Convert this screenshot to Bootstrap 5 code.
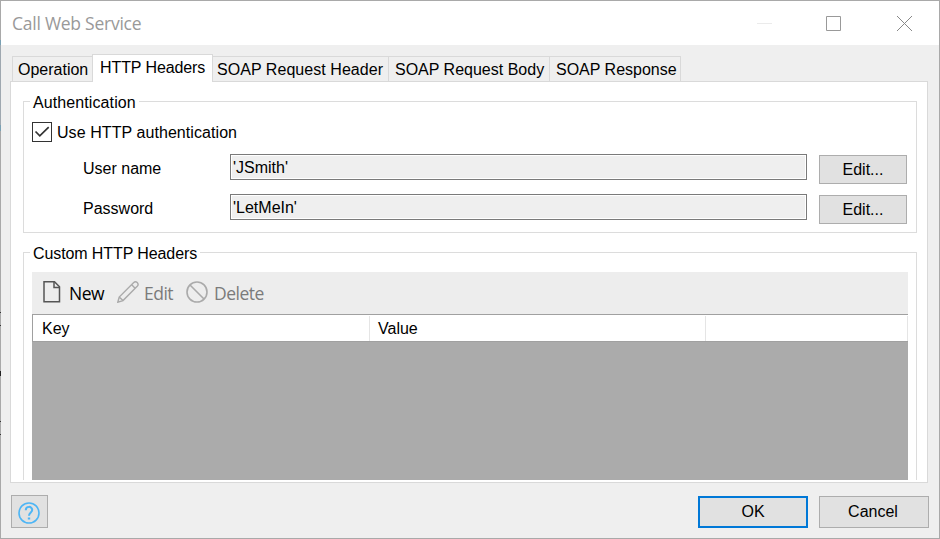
<!DOCTYPE html>
<html lang="en">
<head>
<meta charset="utf-8">
<title>Call Web Service</title>
<link href="https://cdn.jsdelivr.net/npm/bootstrap@5.3.0/dist/css/bootstrap.min.css" rel="stylesheet">
<style>
  body { font-family: "Liberation Sans", Arial, sans-serif; font-size: 16px; line-height: 18px; color: #000; overflow: hidden; }
  .dialog { width: 940px; height: 539px; background: #efefef; border: 1px solid #a9a9a9; }
  .edge { left: -1px; top: -1px; width: 1px; height: 539px;
    background: linear-gradient(#a9a9a9 40px, #79a0b3 40px 45px, #9fa8b0 45px 125px, #79a0b3 125px 131px, #a9a9a9 131px 312px, #333 312px 313px, #a9a9a9 313px 325px, #333 325px 326px, #a9a9a9 326px 371px, #222 371px 376px, #a9a9a9 376px 421px, #333 421px 422px, #a9a9a9 422px 434px, #333 434px 435px, #a9a9a9 435px); }
  .titlebar { height: 44px; padding: 0 27px 0 11px; }
  .seg { font-family: "Open Sans", "Noto Sans", sans-serif; line-height: 24px; white-space: nowrap; }
  .caption { color: #999; font-size: 17.5px; letter-spacing: -.25px; }
  .ctl-max { margin: 0 56px 0 54px; }
  .tabs { height: 37px; padding-left: 11px; margin-bottom: -1px; }
  .tab { height: 26px; border: 1px solid #d9d9d9; border-left: 0; padding: 4px 0 0 5px; white-space: nowrap; }
  .tab-first { border-left: 1px solid #d9d9d9; width: 80px; border-right: 0; }
  .tab-on { height: 28px; width: 121px; background: #fff; border-left: 1px solid #d9d9d9; border-bottom: 0; padding-left: 7px; letter-spacing: -.1px; }
  .w-hdr { width: 176px; padding-left: 4px; letter-spacing: .05px; }
  .w-body { width: 161px; padding-left: 6px; }
  .w-resp { width: 131px; padding-left: 6px; }
  .pane { width: 918px; height: 402px; margin-left: 9px; background: #fff; border: 1px solid #d9d9d9; padding: 19px 10px 2px 12px; }
  .group { border: 1px solid #dcdcdc; width: 894px; padding: 0 9px 0 8px; }
  .group-auth { height: 132px; margin-bottom: 19px; }
  .group-head { height: 228px; border-bottom: 0; }
  .cap { background: #fff; padding: 0 3px; margin: -9px 0 0 -2px; height: 20px; line-height: 20px; white-space: nowrap; }
  .cap-auth { width: 109px; letter-spacing: .1px; }
  .cap-head { width: 170px; letter-spacing: -.1px; }
  .check { width: 20px; height: 20px; border: 1px solid #333; background: #fff; }
  .use-row { margin: 9px 0 12px; gap: 5px; letter-spacing: .07px; }
  .use-row span { padding-top: 2px; }
  .field { height: 29px; margin-bottom: 11px; }
  .field .name { width: 147px; padding-top: 6px; }
  .field .val { width: 577px; height: 26px; border: 1px solid #7a7a7a; background: #efefef; box-shadow: inset 0 0 0 1px #fff; padding: 4px 0 0 2px; }
  .push { background: #e1e1e1; border: 1px solid #adadad; border-radius: 0; color: #000; padding: 0; font-size: 16px; line-height: 18px; }
  .push-edit { width: 88px; height: 29px; margin: 1px 0 0 12px; }
  .tools { background: #ededed; height: 42px; padding: 0 0 2px 11px; width: 876px; margin-top: 8px; }
  .tools svg { flex: none; }
  .tools .seg { font-size: 17.5px; letter-spacing: -.5px; padding-top: 1px; }
  .t-new { width: 48px; margin-left: 8px; }
  .t-edit { width: 42px; margin-left: 5px; }
  .t-del { margin-left: 6px; }
  .off { color: #7b7b7b; }
  .heads { width: 876px; height: 28px; background: #fff; border: 1px solid #a0a0a0; border-right: 0; padding-top: 1px; }
  .heads div { border-right: 1px solid #e5e5e5; padding: 4px 0 0 8px; }
  .heads .h-key { width: 337px; padding-left: 9px; }
  .h-val { width: 336px; }
  .h-rest { width: 202px; }
  .blank { width: 876px; height: 138px; background: #ababab; }
  .foot { padding: 12px 10px 0 10px; }
  .help { width: 37px; height: 33px; padding: 2px 2px 0 0; }
  .wide { width: 110px; height: 32px; margin-top: 1px; }
  .wide-cancel { padding-right: 2px; }
  .main { border: 2px solid #0078d7; margin-right: 11px; }
</style>
<script src="https://cdn.jsdelivr.net/npm/bootstrap@5.3.0/dist/js/bootstrap.bundle.min.js"></script>
</head>
<body>
<div class="dialog position-relative">
  <div class="edge position-absolute"></div>
  <div class="titlebar bg-white d-flex align-items-center justify-content-between">
    <span class="seg caption">Call Web Service</span>
    <div class="d-flex">
      <svg width="15" height="15"><path d="M0 7.5H15" stroke="#ebebeb"/></svg>
      <svg class="ctl-max" width="15" height="15"><path d="M.5.5h14v14H.5z" fill="none" stroke="#999"/></svg>
      <svg width="15" height="15"><path d="M0 0l15 15M15 0L0 15" stroke="#888"/></svg>
    </div>
  </div>
  <div class="tabs d-flex align-items-end">
    <div class="tab tab-first">Operation</div>
    <div class="tab tab-on">HTTP Headers</div>
    <div class="tab w-hdr">SOAP Request Header</div>
    <div class="tab w-body">SOAP Request Body</div>
    <div class="tab w-resp">SOAP Response</div>
  </div>
  <div class="pane">
    <div class="group group-auth">
      <div class="cap cap-auth">Authentication</div>
      <div class="use-row d-flex align-items-center">
        <div class="check d-flex"><svg width="18" height="18"><path d="M2.500 8.500l4.300 4.300L15.700 4.200" fill="none" stroke="#333" stroke-width="1.700"/></svg></div>
        <span>Use HTTP authentication</span>
      </div>
      <div class="field d-flex align-items-start">
        <div class="name ms-auto">User name</div><div class="val">'JSmith'</div><button class="btn push push-edit">Edit...</button>
      </div>
      <div class="field d-flex align-items-start">
        <div class="name ms-auto">Password</div><div class="val">'LetMeIn'</div><button class="btn push push-edit">Edit...</button>
      </div>
    </div>
    <div class="group group-head">
      <div class="cap cap-head">Custom HTTP Headers</div>
      <div class="tools d-flex align-items-center">
        <svg width="18" height="22" fill="none" stroke="#555" stroke-width="1.5"><path d="M1 .8h10.500l5 5V20.700H1z"/><path d="M11 1v5.500h5.500"/></svg>
        <span class="seg t-new">New</span>
        <svg width="22" height="22" fill="none" stroke="#aaa" stroke-width="1.400"><path d="M.8 21.200L2.200 16 16.500 1.700Q18.500 0 20.200 1.600 22 3.400 20.200 5.300L6 19.600ZM2.200 16L6 19.600M14.500 3.600l3.800 3.800"/></svg>
        <span class="seg off t-edit">Edit</span>
        <svg width="22" height="22" fill="none" stroke="#aaa" stroke-width="1.600"><circle cx="11" cy="11" r="10"/><path d="M4 4l14 14"/></svg>
        <span class="seg off t-del">Delete</span>
      </div>
      <div class="heads d-flex"><div class="h-key">Key</div><div class="h-val">Value</div><div class="h-rest"></div></div>
      <div class="blank"></div>
    </div>
  </div>
  <div class="foot d-flex align-items-start">
    <button class="btn push help me-auto d-flex justify-content-center align-items-center" aria-label="Help">
      <svg width="22" height="22" fill="none" stroke="#4db5f5" stroke-width="1.600"><circle cx="11" cy="11" r="10"/><path d="M7.800 8.200C7.800 3.800 14.200 3.800 14.200 8 14.200 10.500 11 10.500 11 13.800" stroke-width="2"/><path d="M11 15.500v2" stroke-width="2.400"/></svg>
    </button>
    <button class="btn push wide main">OK</button>
    <button class="btn push wide wide-cancel">Cancel</button>
  </div>
</div>
</body>
</html>
